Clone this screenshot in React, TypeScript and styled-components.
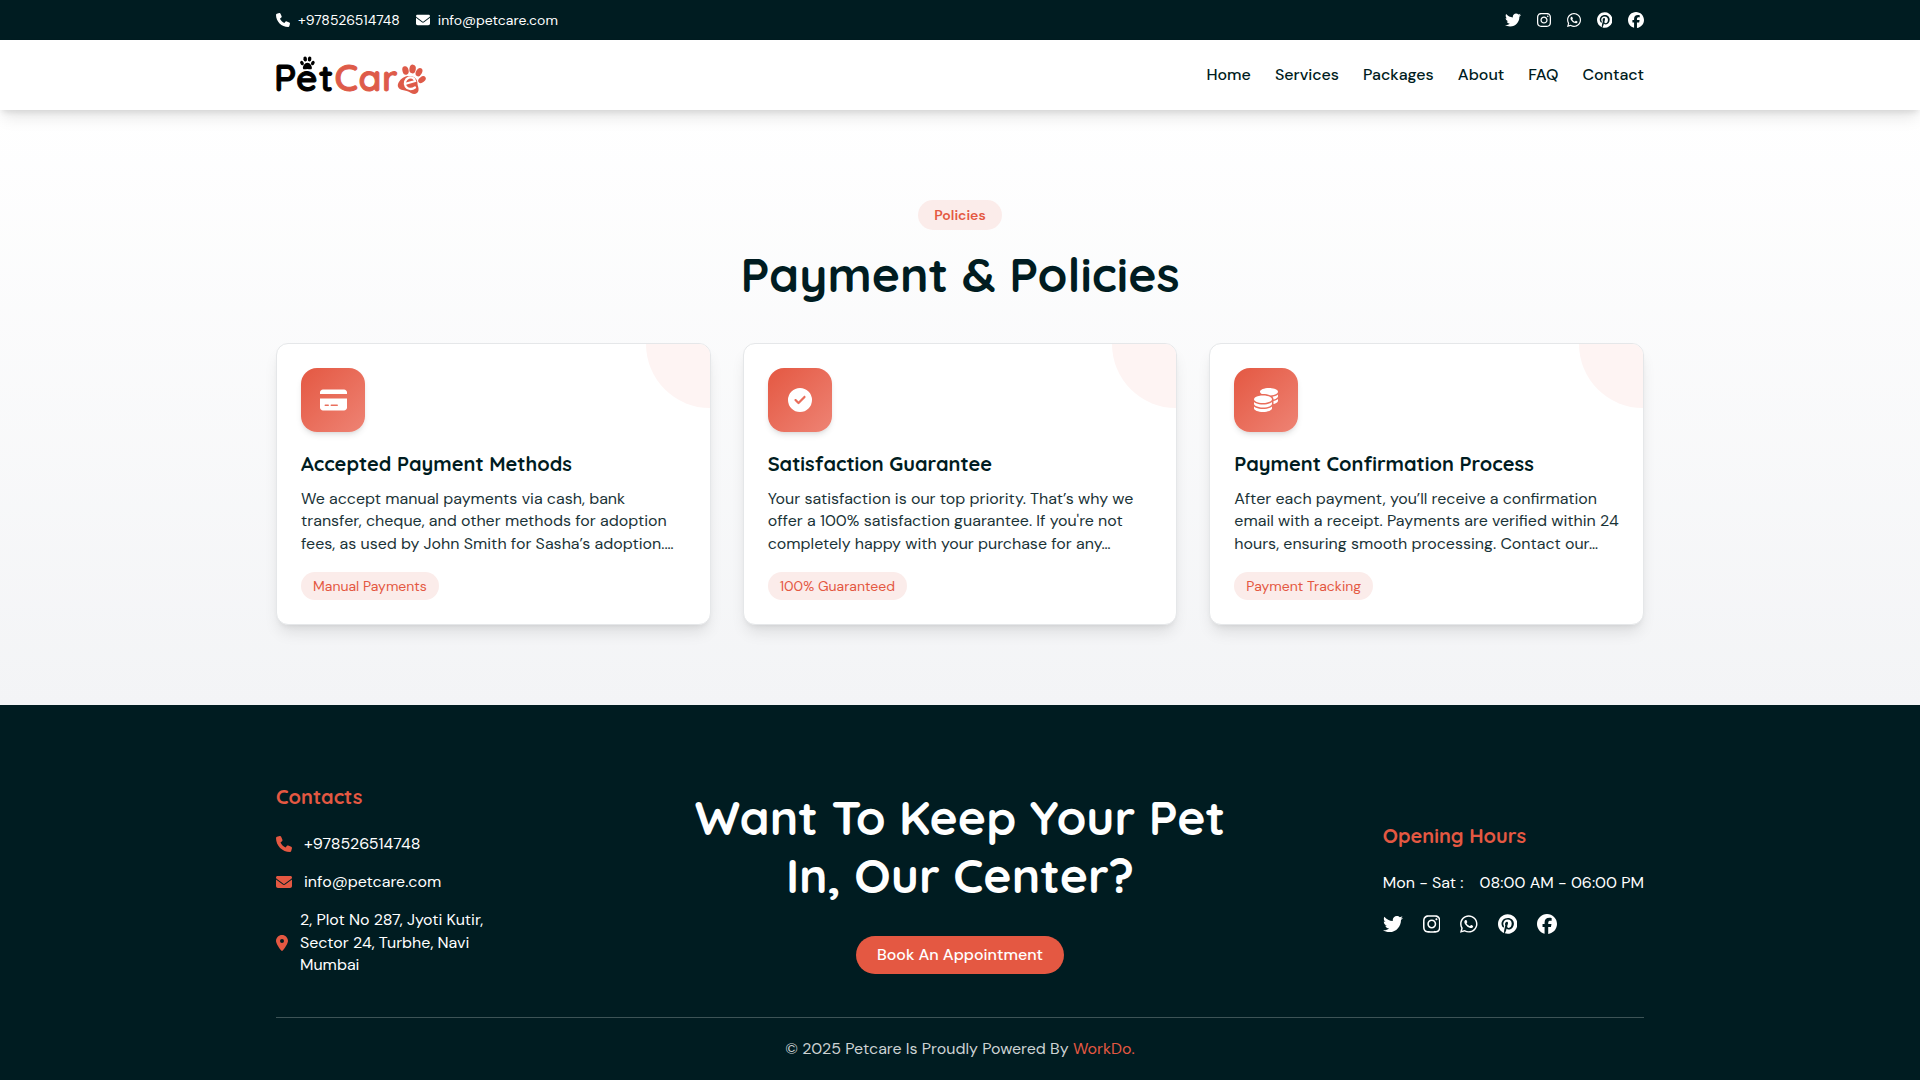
import React from "react";
import styled, { createGlobalStyle } from "styled-components";
import {
  FaPhone,
  FaEnvelope,
  FaTwitter,
  FaInstagram,
  FaWhatsapp,
  FaPinterest,
  FaFacebook,
  FaCreditCard,
  FaCircleCheck,
  FaCoins,
  FaLocationDot,
} from "react-icons/fa6";

const ink = "#001c21";
const accent = "#e45842";
const bodyFont = `"DM Sans", Inter, "Liberation Sans", sans-serif`;
const headFont = `Quicksand, Lato, "Liberation Sans", sans-serif`;

const GlobalStyle = createGlobalStyle`
  *, *::before, *::after { box-sizing: border-box; }
  body {
    margin: 0;
    background: #fff;
    color: ${ink};
    font-family: ${bodyFont};
    font-size: 16px;
    line-height: 22px;
  }
  h1, h2, h3, p, ul, address { margin: 0; padding: 0; }
  ul { list-style: none; }
  address { font-style: normal; }
  a { color: inherit; text-decoration: none; }
  svg { display: block; flex: none; }
`;

const Container = styled.div`
  width: 100%;
  max-width: 1400px;
  margin: 0 auto;
  padding: 0 16px;
`;

const TopBar = styled.div`
  background: ${ink};
  color: #fff;
  font-size: 14px;
`;

const BarRow = styled(Container)<{ $height: number }>`
  display: flex;
  align-items: center;
  justify-content: space-between;
  min-height: ${(p) => p.$height}px;
`;

const TopContacts = styled.ul`
  display: flex;
  gap: 16px;
`;

/* Icon box: $size is the height, $ratio the glyph's own width over a height of 512 */
const Glyph = styled.span<{ $size: number; $ratio?: number }>`
  display: block;
  flex: none;
  svg {
    width: auto;
    height: ${(p) => p.$size}px;
    aspect-ratio: ${(p) => p.$ratio ?? 512} / 512;
  }
`;

const IconLink = styled.a<{ $gap: number }>`
  display: flex;
  align-items: center;
  gap: ${(p) => p.$gap}px;
`;

const SocialList = styled.ul<{ $gap: number }>`
  display: flex;
  align-items: center;
  gap: ${(p) => p.$gap}px;
  a {
    display: block;
  }
`;

const Header = styled.header`
  position: relative;
  z-index: 1;
  background: #fff;
  box-shadow: 0 10px 15px -3px rgba(0, 0, 0, 0.1), 0 4px 6px -2px rgba(0, 0, 0, 0.1);
`;

const Nav = styled.nav`
  display: flex;
  gap: 24px;
  font-weight: 500;
`;

const LogoArt = styled.svg`
  overflow: visible;
`;

const LogoText = styled.text`
  font-family: ${headFont};
  font-weight: 600;
  font-size: 37px;
`;

const Section = styled.section`
  padding: 90px 0 80px;
  background: linear-gradient(#fff, #f3f4f6);
`;

const SectionHead = styled.div`
  display: flex;
  flex-direction: column;
  align-items: center;
  gap: 15px;
  margin-bottom: 40px;
  text-align: center;
`;

const Eyebrow = styled.span`
  padding: 4px 16px;
  border-radius: 15px;
  background: #fbecea;
  color: ${accent};
  font-size: 14px;
  font-weight: 600;
`;

const Title = styled.h1`
  font-family: ${headFont};
  font-size: 48px;
  line-height: 58px;
  font-weight: 700;
`;

const Cards = styled.div`
  display: grid;
  grid-template-columns: repeat(3, minmax(0, 1fr));
  gap: 32px;
  @media (max-width: 1000px) {
    grid-template-columns: minmax(0, 1fr);
  }
`;

const CardBox = styled.article`
  position: relative;
  overflow: hidden;
  display: flex;
  flex-direction: column;
  align-items: flex-start;
  padding: 24px;
  border: 1px solid #e5e7e9;
  border-radius: 12px;
  background: #fff;
  box-shadow: 0 10px 15px -3px rgba(0, 0, 0, 0.1), 0 4px 6px -4px rgba(0, 0, 0, 0.1);
  &::before {
    content: "";
    position: absolute;
    top: -64px;
    right: -64px;
    width: 128px;
    height: 128px;
    border-radius: 50%;
    background: #fef4f3;
  }
`;

const IconTile = styled.div`
  display: grid;
  place-items: center;
  width: 64px;
  height: 64px;
  margin-bottom: 20px;
  border-radius: 16px;
  color: #fff;
  background: linear-gradient(135deg, ${accent}, #ee8374);
  box-shadow: 0 4px 6px -1px rgba(0, 0, 0, 0.1), 0 2px 4px -2px rgba(0, 0, 0, 0.1);
`;

const CardTitle = styled.h3`
  margin-bottom: 12px;
  font-family: ${headFont};
  font-size: 20px;
  line-height: 24px;
  font-weight: 700;
`;

const CardText = styled.p`
  margin-bottom: 17px;
  line-height: 1.4;
  color: #1a3337;
`;

const Tag = styled.span`
  padding: 3px 12px;
  border-radius: 14px;
  background: #fbecea;
  color: ${accent};
  font-size: 14px;
`;

const Footer = styled.footer`
  padding-top: 80px;
  background: ${ink};
  color: #fff;
`;

const FooterGrid = styled.div`
  display: grid;
  grid-template-columns: minmax(0, 1fr) minmax(0, 560px) minmax(0, 1fr);
  align-items: center;
  padding-bottom: 41px;
  border-bottom: 1px solid #3d5356;
`;

const FooterColumn = styled.div<{ $end?: boolean }>`
  display: flex;
  flex-direction: column;
  gap: 24px;
  justify-self: ${(p) => (p.$end ? "end" : "start")};
`;

const FooterHeading = styled.h3`
  color: ${accent};
  font-family: ${headFont};
  font-size: 20px;
  line-height: 24px;
  font-weight: 700;
`;

const ContactList = styled.ul`
  display: flex;
  flex-direction: column;
  gap: 16px;
  svg {
    color: ${accent};
  }
`;

const Address = styled.address`
  max-width: 200px;
  line-height: 1.4;
`;

const Promo = styled.div`
  display: flex;
  flex-direction: column;
  align-items: center;
  gap: 32px;
  text-align: center;
`;

const PromoTitle = styled(Title).attrs({ as: "h2" })``;

const BookButton = styled.button`
  padding: 8px 21px;
  border: 0;
  border-radius: 19px;
  background: ${accent};
  color: #fff;
  font: 500 16px/22px ${bodyFont};
  cursor: pointer;
`;

const HoursBlock = styled.div`
  display: flex;
  flex-direction: column;
  gap: 20px;
  padding-bottom: 4px;
`;

const Hours = styled.p`
  display: flex;
  gap: 16px;
`;

const Copyright = styled.p`
  padding: 20px 0;
  text-align: center;
  color: #ccd2d3;
  a {
    color: ${accent};
  }
`;

const socials = [
  { name: "Twitter", Icon: FaTwitter, ratio: 512 },
  { name: "Instagram", Icon: FaInstagram, ratio: 448 },
  { name: "WhatsApp", Icon: FaWhatsapp, ratio: 448 },
  { name: "Pinterest", Icon: FaPinterest, ratio: 496 },
  { name: "Facebook", Icon: FaFacebook, ratio: 512 },
];

const cards = [
  {
    Icon: FaCreditCard,
    ratio: 576,
    title: "Accepted Payment Methods",
    lines: [
      "We accept manual payments via cash, bank",
      "transfer, cheque, and other methods for adoption",
      "fees, as used by John Smith for Sasha’s adoption.…",
    ],
    tag: "Manual Payments",
  },
  {
    Icon: FaCircleCheck,
    ratio: 512,
    title: "Satisfaction Guarantee",
    lines: [
      "Your satisfaction is our top priority. That’s why we",
      "offer a 100% satisfaction guarantee. If you're not",
      "completely happy with your purchase for any…",
    ],
    tag: "100% Guaranteed",
  },
  {
    Icon: FaCoins,
    ratio: 512,
    title: "Payment Confirmation Process",
    lines: [
      "After each payment, you’ll receive a confirmation",
      "email with a receipt. Payments are verified within 24",
      "hours, ensuring smooth processing. Contact our…",
    ],
    tag: "Payment Tracking",
  },
];

function Socials({ size }: { size: number }) {
  return (
    <SocialList $gap={size}>
      {socials.map(({ name, Icon, ratio }) => (
        <li key={name}>
          <a href="#" aria-label={name}>
            <Glyph $size={size} $ratio={ratio}>
              <Icon />
            </Glyph>
          </a>
        </li>
      ))}
    </SocialList>
  );
}

function Logo() {
  return (
    <LogoArt width="152" height="42" viewBox="0 0 152 42" role="img" aria-label="PetCare">
      <g fill="#000" stroke="#000" strokeWidth="1" strokeLinejoin="round">
        <LogoText x="-2" y="36.500">P</LogoText>
        <LogoText x="20" y="36.500">e</LogoText>
        <LogoText x="43" y="36.500">t</LogoText>
      </g>
      <g fill="#de5b49" stroke="#de5b49" strokeWidth="1" strokeLinejoin="round">
        <LogoText x="58.500" y="36.500">C</LogoText>
        <LogoText x="82.500" y="36.500">a</LogoText>
        <LogoText x="106" y="36.500">r</LogoText>
      </g>
      {/* small black paw above the first e */}
      <g fill="#000">
        <ellipse cx="26" cy="9" rx="1.700" ry="2.400" transform="rotate(-28 26 9)" />
        <ellipse cx="29.200" cy="5" rx="1.800" ry="2.600" transform="rotate(-8 29.200 5)" />
        <ellipse cx="33.600" cy="5" rx="1.800" ry="2.600" transform="rotate(8 33.600 5)" />
        <ellipse cx="36.800" cy="9" rx="1.700" ry="2.400" transform="rotate(28 36.800 9)" />
        <path d="M31.400 8.800c2.600 0 5 3.600 4.400 5.600-.5 1.500-2.500.6-4.400.6s-3.900.9-4.400-.6c-.6-2 1.800-5.600 4.400-5.600z" />
      </g>
      {/* tilted coral paw holding the last e */}
      <g fill="#de5b49">
        <ellipse cx="129.500" cy="16.500" rx="3.100" ry="4.300" transform="rotate(-14 129.500 16.500)" />
        <ellipse cx="136.600" cy="15" rx="3.200" ry="4.400" transform="rotate(8 136.600 15)" />
        <ellipse cx="143" cy="18.200" rx="3" ry="4.400" transform="rotate(28 143 18.200)" />
        <ellipse cx="146" cy="25.600" rx="2.800" ry="4.200" transform="rotate(52 146 25.600)" />
        <path d="M122 30c1.500-4 5-7.500 10-8 6-.6 9.500 3 9.500 7.500 0 2.500 1.500 4 1 7-.6 3.500-4.500 4.500-7.500 2.500-3-2-5.500-2.500-8.500-3-3-.4-5.500-3-4.500-6z" />
      </g>
      <g stroke="#fff" strokeWidth="2.300" strokeLinecap="round" fill="none">
        <path d="M130.500 29.500l8.500-2.500c-.8-3.200-3.600-4.300-6.300-3.300-3.600 1.400-4.700 5.600-3 8.600 1.800 3 6 3.600 9.300 1.200" />
      </g>
    </LogoArt>
  );
}

export default function App() {
  return (
    <>
      <GlobalStyle />
      <TopBar>
        <BarRow $height={40}>
          <TopContacts>
            <li>
              <IconLink href="tel:+978526514748" $gap={8}>
                <Glyph $size={14}>
                  <FaPhone />
                </Glyph>
                +978526514748
              </IconLink>
            </li>
            <li>
              <IconLink href="mailto:info@petcare.com" $gap={8}>
                <Glyph $size={14}>
                  <FaEnvelope />
                </Glyph>
                info@petcare.com
              </IconLink>
            </li>
          </TopContacts>
          <Socials size={16} />
        </BarRow>
      </TopBar>
      <Header>
        <BarRow $height={70}>
          <a href="#">
            <Logo />
          </a>
          <Nav>
            {["Home", "Services", "Packages", "About", "FAQ", "Contact"].map((label) => (
              <a href="#" key={label}>
                {label}
              </a>
            ))}
          </Nav>
        </BarRow>
      </Header>
      <main>
        <Section>
          <Container>
            <SectionHead>
              <Eyebrow>Policies</Eyebrow>
              <Title>Payment &amp; Policies</Title>
            </SectionHead>
            <Cards>
              {cards.map(({ Icon, ratio, title, lines, tag }) => (
                <CardBox key={title}>
                  <IconTile>
                    <Glyph $size={24} $ratio={ratio}>
                      <Icon />
                    </Glyph>
                  </IconTile>
                  <CardTitle>{title}</CardTitle>
                  <CardText>
                    {lines.map((line, i) => (
                      <React.Fragment key={line}>
                        {i > 0 && <br />}
                        {line}
                      </React.Fragment>
                    ))}
                  </CardText>
                  <Tag>{tag}</Tag>
                </CardBox>
              ))}
            </Cards>
          </Container>
        </Section>
      </main>
      <Footer>
        <Container>
          <FooterGrid>
            <FooterColumn>
              <FooterHeading>Contacts</FooterHeading>
              <ContactList>
                <li>
                  <IconLink href="tel:+978526514748" $gap={12}>
                    <Glyph $size={16}>
                      <FaPhone />
                    </Glyph>
                    +978526514748
                  </IconLink>
                </li>
                <li>
                  <IconLink href="mailto:info@petcare.com" $gap={12}>
                    <Glyph $size={16}>
                      <FaEnvelope />
                    </Glyph>
                    info@petcare.com
                  </IconLink>
                </li>
                <li>
                  <IconLink as="div" $gap={12}>
                    <Glyph $size={16} $ratio={384}>
                      <FaLocationDot />
                    </Glyph>
                    <Address>2, Plot No 287, Jyoti Kutir, Sector 24, Turbhe, Navi Mumbai</Address>
                  </IconLink>
                </li>
              </ContactList>
            </FooterColumn>
            <Promo>
              <PromoTitle>
                Want To Keep Your Pet
                <br />
                In, Our Center?
              </PromoTitle>
              <BookButton type="button">Book An Appointment</BookButton>
            </Promo>
            <FooterColumn $end>
              <FooterHeading>Opening Hours</FooterHeading>
              <HoursBlock>
                <Hours>
                  <span>Mon - Sat :</span>
                  <span>08:00 AM - 06:00 PM</span>
                </Hours>
                <Socials size={20} />
              </HoursBlock>
            </FooterColumn>
          </FooterGrid>
          <Copyright>
            © 2025 Petcare Is Proudly Powered By <a href="#">WorkDo.</a>
          </Copyright>
        </Container>
      </Footer>
    </>
  );
}
